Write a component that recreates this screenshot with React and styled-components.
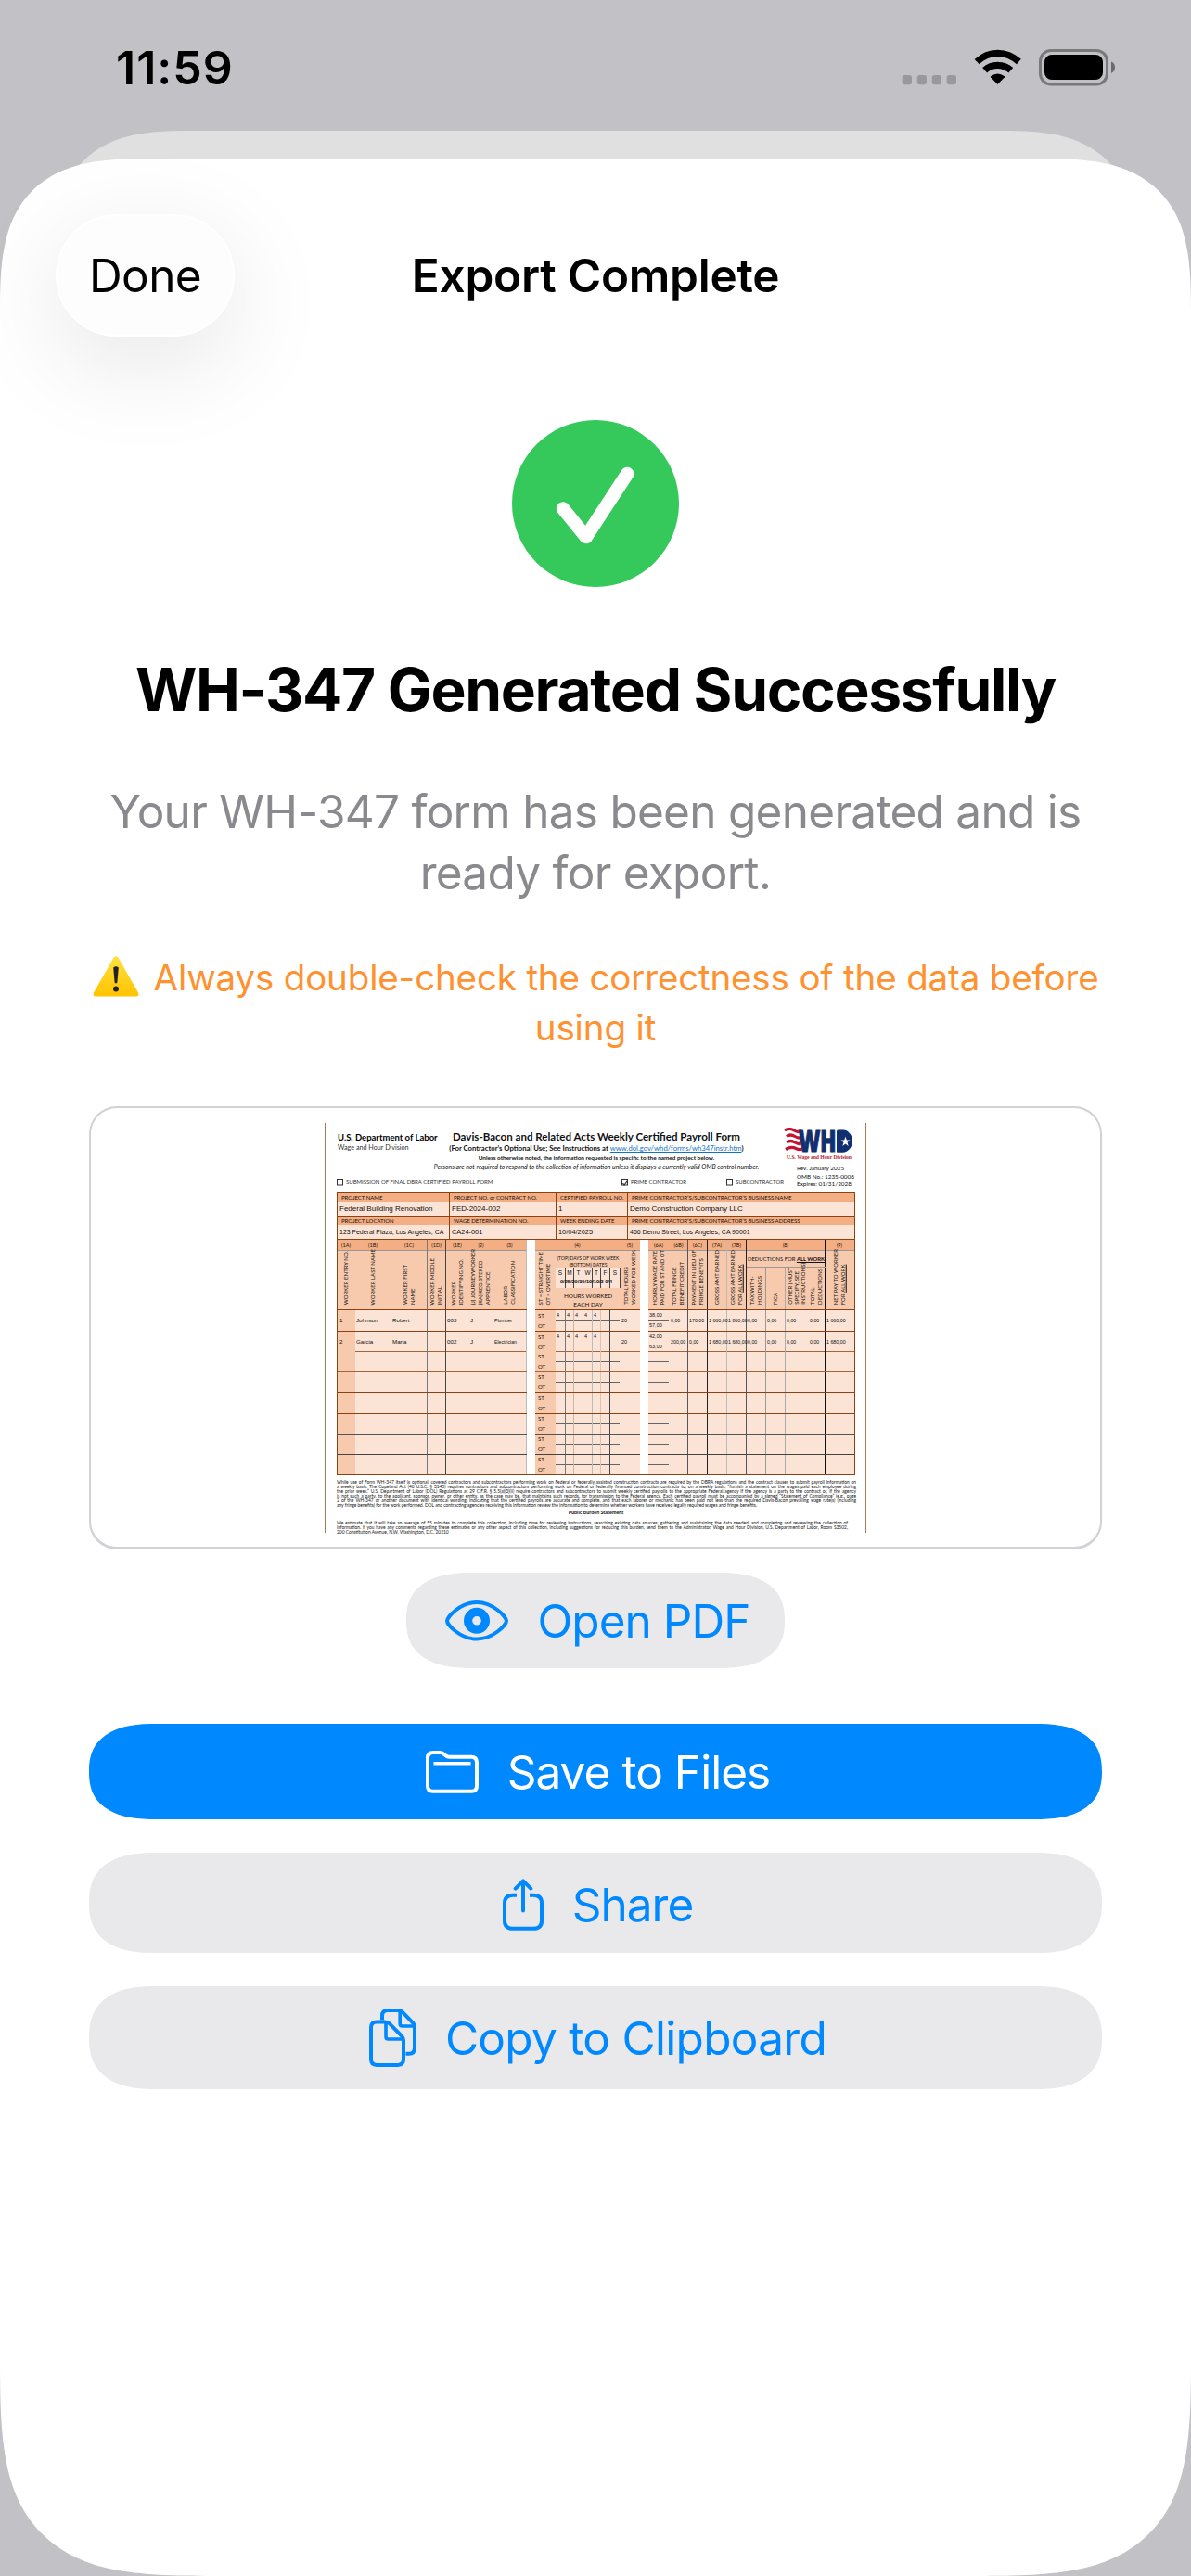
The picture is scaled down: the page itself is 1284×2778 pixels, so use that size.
import React from 'react';
import styled, { createGlobalStyle } from 'styled-components';

const GlobalStyle = createGlobalStyle`
  * {
    box-sizing: border-box;
  }
  body {
    margin: 0;
    background-color: #c2c1c6;
    font-family: Inter, 'Liberation Sans', sans-serif;
  }
`;

const Screen = styled.div`
  width: 1284px;
  height: 2778px;
  overflow: hidden;
  display: flex;
  flex-direction: column;
  background-color: #c2c1c6;
`;

const StatusBar = styled.div`
  flex: none;
  height: 141px;
  padding: 53px 81px 0 125px;
  display: flex;
  justify-content: space-between;
`;

const Time = styled.div`
  height: 40px;
  line-height: 40px;
  font-size: 50px;
  font-weight: 600;
  letter-spacing: 1px;
`;

const BackSheet = styled.div`
  flex: none;
  height: 160px;
  margin: 0 57px -130px;
  background-color: #e0e0e0;
  border-radius: 112px 112px 0 0;
  @supports (corner-shape: superellipse(1.4)) {
    border-radius: 145px 145px 0 0;
    corner-shape: superellipse(1.44);
  }
`;

const Sheet = styled.div`
  position: relative;
  flex: none;
  height: 2607px;
  padding-top: 60px;
  display: flex;
  flex-direction: column;
  background-color: #fff;
  border-radius: 119px 119px 155px 155px;
  @supports (corner-shape: superellipse(1.4)) {
    border-radius: 165px 165px 238px 238px;
    corner-shape: superellipse(1.55) superellipse(1.55) superellipse(1.71)
      superellipse(1.71);
  }
`;

const NavBar = styled.div`
  display: grid;
  grid-template-columns: 1fr auto 1fr;
  align-items: center;
  padding: 0 60px;
`;

const DoneButton = styled.button`
  width: 193px;
  height: 132px;
  padding: 0;
  border: 2px solid #fff;
  border-radius: 66px;
  background-color: #fdfdfd;
  box-shadow: 0 28px 110px rgba(0, 0, 0, 0.1);
  font-family: inherit;
  font-size: 49.5px;
  letter-spacing: -0.6px;
  color: #000;
`;

const NavTitle = styled.div`
  font-size: 49.5px;
  font-weight: 600;
  letter-spacing: -0.25px;
`;

const Content = styled.div`
  padding: 90px 96px 0;
  display: flex;
  flex-direction: column;
  align-items: center;
  text-align: center;
  white-space: nowrap;
`;

const Heading = styled.h1`
  margin: 72px 0 0;
  font-size: 64px;
  line-height: 78px;
  font-weight: 650;
  letter-spacing: -1.3px;
`;

const Message = styled.p`
  margin: 59px 0 0;
  font-size: 49.5px;
  line-height: 66px;
  letter-spacing: -0.72px;
  color: #8a8a8e;
`;

const Warning = styled.p`
  margin: 53px 0 58px;
  font-size: 38.5px;
  line-height: 54px;
  letter-spacing: -0.15px;
  color: #ff9230;
`;

const WarnIcon = styled.svg`
  width: 50px;
  height: 44px;
  margin-right: 16px;
  vertical-align: -7px;
`;

const Action = styled.button`
  width: ${(props) => props.$width || '100%'};
  height: ${(props) => props.$height}px;
  margin: ${(props) => props.$gap}px 0 0;
  padding: ${(props) => props.$drop || 0}px 0 0 5px;
  border: 0;
  display: flex;
  align-items: center;
  justify-content: center;
  gap: 31px;
  background-color: ${(props) => (props.$primary ? '#0088ff' : '#e9e9eb')};
  color: ${(props) => (props.$primary ? '#fff' : '#0088ff')};
  font-family: inherit;
  font-size: 49.5px;
  letter-spacing: ${(props) => props.$spacing || -0.95}px;
  border-radius: 56px;
  @supports (corner-shape: superellipse(1.4)) {
    border-radius: 72px / 50%;
    corner-shape: superellipse(1.32);
  }

  svg {
    flex: none;
    fill: none;
    stroke: currentColor;
    stroke-width: 4;
    stroke-linecap: round;
    stroke-linejoin: round;
  }
`;

/* ---- document preview ---- */

const brown = '#8b4213';

const Preview = styled.div`
  width: 1092px;
  height: 478px;
  padding-top: 16px;
  display: flex;
  justify-content: center;
  border: solid #d1d1d6;
  border-width: 2px 2px 3px;
  border-radius: 30px;
`;

const Doc = styled.div`
  width: 584px;
  height: 442px;
  padding: 0 11px 0 12px;
  border: solid #b07a55;
  border-width: 0 1px;
  font-family: Lato, 'Open Sans', sans-serif;
  font-size: 6px;
  line-height: 1;
  text-align: left;
  color: #111;
`;

const DocHeader = styled.div`
  height: 60px;
  display: grid;
  grid-template-columns: 100px 360px 1fr;
`;

const Dept = styled.div`
  padding: 10px 0 0 1px;
  font-size: 7.2px;
  line-height: 11px;
  color: #333;
`;

const DeptName = styled.div`
  font-size: 9.5px;
  font-weight: 700;
  color: #000;
`;

const Titles = styled.div`
  padding-top: 8px;
  display: flex;
  flex-direction: column;
  align-items: center;
`;

const DocTitle = styled.div`
  font-size: 11.55px;
  line-height: 13px;
  font-weight: 700;
`;

const DocNote = styled.div`
  font-size: ${(props) => props.$size}px;
  line-height: ${(props) => props.$line}px;
  font-weight: ${(props) => (props.$bold ? 700 : 400)};
  font-style: ${(props) => (props.$italic ? 'italic' : 'normal')};

  span {
    color: #1272c4;
    font-weight: 400;
    text-decoration: underline;
  }
`;

const Brand = styled.div`
  padding: 5px 0 0 22px;

  svg {
    display: block;
  }
`;

const Revision = styled.div`
  padding: 4px 0 0 14px;
  font-size: 6.4px;
  line-height: 8.5px;
`;

const Checks = styled.div`
  height: 15px;
  display: grid;
  grid-template-columns: 307px 113px 1fr;
  font-size: 6px;
  color: #333;
`;

const Check = styled.div`
  display: flex;
  align-items: flex-start;
  gap: 3px;
  line-height: 8px;

  svg {
    fill: none;
    stroke: #333;
  }
`;

const Info = styled.div`
  display: grid;
  grid-template-columns: 121px 115px 77px 1fr;
  border: solid ${brown};
  border-width: 0 0 0 1px;
`;

const InfoCell = styled.div`
  height: 25px;
  border: solid ${brown};
  border-width: 1px 1px 0 0;
`;

const InfoLabel = styled.div`
  height: 9px;
  padding-left: 4px;
  line-height: 9px;
  font-size: 6px;
  background-color: #f4ae83;
`;

const InfoValue = styled.div`
  height: 15px;
  padding-left: 2px;
  line-height: 15px;
  font-family: 'Liberation Sans', sans-serif;
  font-size: ${(props) => props.$size || 8}px;
  background-color: #fbe4d6;
`;

const Tables = styled.div`
  height: 255px;
  display: grid;
  grid-template-columns: 204px 113px 222px;
  column-gap: 9px;
  border: 1px solid ${brown};
`;

const Table = styled.div`
  min-width: 0;
  display: flex;
  flex-direction: column;
`;

const Row = styled.div`
  flex: none;
  display: grid;
  grid-template-columns: ${(props) => props.$cols};
  height: ${(props) => props.$height}px;
  background-color: ${(props) => props.$fill || '#fbe4d6'};
  border-bottom: 1px solid ${(props) => props.$line};
`;

const NumberCell = styled.div`
  grid-column: span ${(props) => props.$span || 1};
  border-right: 1px solid ${(props) => props.$edge || 'transparent'};
  line-height: 12px;
  font-size: 5.6px;
  text-align: center;
`;

const HeadCell = styled.div`
  min-width: 0;
  height: ${(props) => props.$height || 63}px;
  padding: 0 0 5px;
  display: flex;
  justify-content: center;
  align-items: flex-end;
  border-right: 1px solid ${(props) => props.$edge || 'transparent'};
`;

const Vertical = styled.div`
  writing-mode: vertical-rl;
  transform: rotate(180deg);
  font-size: 6px;
  line-height: ${(props) => props.$line || 8.2}px;
  white-space: pre;

  u {
    text-decoration-thickness: 0.5px;
  }
`;

const Cell = styled.div`
  min-width: 0;
  padding-left: ${(props) => props.$pad || 1}px;
  border-right: 1px solid ${(props) => props.$edge || 'transparent'};
  background-color: ${(props) => props.$fill || 'transparent'};
  font-family: 'Liberation Sans', sans-serif;
  font-size: ${(props) => props.$size || 5.5}px;
  line-height: 22px;
`;

const SplitCell = styled(Cell)`
  display: grid;
  grid-template-rows: 1fr 1fr;
  align-items: center;
  line-height: 1;
  font-family: ${(props) =>
    props.$mark ? 'Lato, sans-serif' : "'Liberation Sans', sans-serif"};
  font-size: ${(props) => (props.$mark ? 6 : 5.5)}px;
  background-image: linear-gradient(
    ${(props) => (props.$split ? '#666, #666' : 'transparent, transparent')}
  );
  background-size: 100% 1px;
  background-position: 0 50%;
  background-repeat: no-repeat;
`;

const WeekHead = styled.div`
  grid-column: span 7;
  height: 63px;
  padding-top: 5px;
  display: flex;
  flex-direction: column;
  font-size: 5px;
  line-height: 6.5px;
  text-align: center;
`;

const WeekDays = styled.div`
  display: grid;
  grid-template-columns: 11px 9px 10px 10px 9px 10px 11px;
  grid-template-rows: 10px 12px;
  background-color: #fbe4d6;
  font-family: 'Liberation Sans', sans-serif;
  font-size: 6.5px;
  line-height: 11px;

  div {
    border-right: 1px solid #444;
  }
`;

const Dates = styled.div`
  margin-top: -10px;
  padding-left: 5px;
  text-align: left;
  font-family: 'Liberation Sans', sans-serif;
  font-size: 5.6px;
  font-weight: 700;
`;

const HoursWorked = styled.div`
  padding-top: 7px;
  font-size: 6.4px;
  line-height: 9px;
`;

const Deductions = styled.div`
  grid-column: span 4;
  display: grid;
  grid-template-columns: 21px 21px 25px 18px;
  grid-template-rows: 18px 45px;
  border-right: 1px solid #111;
`;

const DeductionsTitle = styled.div`
  grid-column: span 4;
  line-height: 18px;
  font-size: 5.9px;
  text-align: center;
  border-bottom: 1px solid #999;
`;

const FinePrint = styled.div`
  padding-top: 5px;
  font-size: 4.9px;
  line-height: 5px;

  p {
    margin: 0;
    height: 5px;
    width: ${(props) => props.$width || 560}px;
    text-align-last: justify;
  }
`;

const FineTitle = styled.div`
  padding: 3px 0 1px;
  line-height: 5px;
  font-size: 5.4px;
  font-weight: 700;
  text-align: center;
`;

const ROWS = [23, 22, 22, 22, 23, 22, 22, 22];
const LINES = [brown, '#a0673f', '#a0673f', brown, brown, '#555', '#444', brown];
const SPLITS = [true, false, true, true, false, true, true, true];

const WORKERS = [
  {
    left: ['1', 'Johnson', 'Robert', '', '003', 'J', 'Plumber'],
    rates: ['38,00', '57,00'],
    pay: ['0,00', '170,00', '1 660,00', '1 860,00', '0,00', '0,00', '0,00', '0,00', '1 660,00'],
  },
  {
    left: ['2', 'Garcia', 'Maria', '', '002', 'J', 'Electrician'],
    rates: ['42,00', '63,00'],
    pay: ['200,00', '0,00', '1 680,00', '1 680,00', '0,00', '0,00', '0,00', '0,00', '1 680,00'],
  },
];

const LEFT_COLS = '19px 39px 39px 20px 25px 26px 36px';
const LEFT_EDGES = ['', '#777', '#777', '#444', '', '#666', '#bbb'];
const MID_COLS = '22px 11px 9px 10px 10px 9px 10px 11px 21px';
const MID_EDGES = ['', '#777', '#ccb5a8', '#222', '#bbb', '#d8c4b8', '#444', ''];
const RIGHT_COLS = '23px 20px 21px 21px 21px 21px 21px 25px 18px 31px';
const RIGHT_EDGES = ['', '#555', '#222', '#bbb', '#555', '#999', '#aaa', '', '#111', ''];

const LEFT_HEADS = [
  ['(1A)', 'WORKER ENTRY NO.'],
  ['(1B)', 'WORKER LAST NAME'],
  ['(1C)', 'WORKER FIRST\nNAME'],
  ['(1D)', 'WORKER MIDDLE\nINITIAL'],
  ['(1E)', 'WORKER\nIDENTIFYING NO.'],
  ['(2)', '(J) JOURNEYWORKER\n(RA) REGISTERED\nAPPRENTICE'],
  ['(3)', 'LABOR\nCLASSIFICATION'],
];

const FINE_LINES = [
  'While use of Form WH-347 itself is optional, covered contractors and subcontractors performing work on Federal or federally assisted construction contracts are required by the DBRA regulations and the contract clauses to submit payroll information on',
  'a weekly basis. The Copeland Act (40 U.S.C. § 3145) requires contractors and subcontractors performing work on Federal or federally financed construction contracts to, on a weekly basis, “furnish a statement on the wages paid each employee during',
  'the prior week.” U.S. Department of Labor (DOL) Regulations at 29 C.F.R. § 5.5(a)(3)(ii) require contractors and subcontractors to submit weekly certified payrolls to the appropriate Federal agency if the agency is a party to the contract or, if the agency',
  'is not such a party, to the applicant, sponsor, owner, or other entity, as the case may be, that maintains such records, for transmission to the Federal agency. Each certified payroll must be accompanied by a signed “Statement of Compliance” (e.g., page',
  '2 of the WH-347 or another document with identical wording) indicating that the certified payrolls are accurate and complete, and that each laborer or mechanic has been paid not less than the required Davis-Bacon prevailing wage rate(s) (including',
];

const BURDEN_LINES = [
  'We estimate that it will take an average of 55 minutes to complete this collection, including time for reviewing instructions, searching existing data sources, gathering and maintaining the data needed, and completing and reviewing the collection of',
  'information. If you have any comments regarding these estimates or any other aspect of this collection, including suggestions for reducing this burden, send them to the Administrator, Wage and Hour Division, U.S. Department of Labor, Room S3502,',
];

const StatusIcons = () => (
  <svg width="231" height="40" viewBox="972 53 231 40">
    <g fill="#99999c">
      <rect x="972.7" y="81" width="10.3" height="10.3" rx="3" />
      <rect x="988.7" y="81" width="10.3" height="10.3" rx="3" />
      <rect x="1004.7" y="81" width="10.3" height="10.3" rx="3" />
      <rect x="1020.7" y="81" width="10.3" height="10.3" rx="3" />
    </g>
    <path d="M1075.5 91L1068 83.3Q1067.6 82.6 1068.4 82Q1075.5 77 1082.6 82Q1083.4 82.6 1083 83.3Z" />
    <g fill="none" stroke="#000">
      <path d="M1053.2 66.6Q1063 57.4 1075.5 57.4Q1088 57.4 1098.4 66.6" strokeWidth="7.4" />
      <path d="M1061.6 75.8Q1067.5 70.4 1075.5 70.4Q1083.5 70.4 1089.8 75.8" strokeWidth="7.4" />
    </g>
    <rect x="1121.5" y="54.5" width="72" height="36.5" rx="11.5" fill="none" stroke="#79797c" strokeWidth="3" />
    <rect x="1126" y="59" width="63" height="27" rx="8" />
    <path d="M1198 66.5Q1202 68 1202 72.5T1198 79Z" fill="#6a6a6d" />
  </svg>
);

const SuccessIcon = () => (
  <svg width="180" height="180" viewBox="0 0 180 180">
    <circle cx="90" cy="90" r="90" fill="#35c85a" />
    <path
      d="M55 95.5L79.8 126L124.2 58"
      fill="none"
      stroke="#fff"
      strokeWidth="14.5"
      strokeLinecap="round"
      strokeLinejoin="round"
    />
  </svg>
);

const WarningIcon = () => (
  <WarnIcon viewBox="0 0 50 44">
    <defs>
      <linearGradient id="warn" x1="0" y1="0" x2="0" y2="1">
        <stop offset="0" stopColor="#ffe040" />
        <stop offset="1" stopColor="#ffc400" />
      </linearGradient>
    </defs>
    <path
      d="M22.6 1.6Q25 -1 27.4 1.6L49 39.5Q50.4 43.4 47 43.6H3Q-0.4 43.4 1 39.5Z"
      fill="url(#warn)"
    />
    <path d="M22.2 12.5Q25 10 27.8 12.5L26.4 28.5Q25 30.5 23.6 28.5Z" fill="#222" />
    <circle cx="25" cy="35.6" r="3" fill="#222" />
  </WarnIcon>
);

const EyeIcon = () => (
  <svg width="68" height="44" viewBox="0 0 68 44">
    <path d="M2 22C2 18 16 2 34 2S66 18 66 22S52 41.500 34 41.500S2 26 2 22Z" />
    <circle cx="34" cy="21.800" r="9.400" strokeWidth="9.200" />
  </svg>
);

const FolderIcon = () => (
  <svg width="57" height="46" viewBox="0 0 57 46">
    <path d="M2 38V8Q2 2 8 2H15.500Q18 2 20 4L21.500 5.300Q23 6.700 25.500 6.700H49Q55 6.700 55 12.700V38Q55 43.700 49.500 43.700H7.500Q2 43.700 2 38Z" />
    <path d="M8.500 13.800H48.500" strokeWidth="3.600" strokeLinecap="butt" />
  </svg>
);

const ShareIcon = () => (
  <svg width="44" height="56" viewBox="0 0 44 56">
    <path d="M15 17.800H11Q2 17.800 2 26.500V45.500Q2 53.800 11 53.800H33Q42 53.800 42 45.500V26.500Q42 17.800 33 17.800H29" strokeLinecap="butt" />
    <path d="M22 34.500V2.500M13.700 10.700L22 2.300L30.300 10.700" />
  </svg>
);

const CopyIcon = () => (
  <svg width="51" height="63" viewBox="0 0 51 63">
    <path d="M14 12.500V8Q14 2 20 2H31.500Q34 2 35.600 3.700L47.300 15.600Q49 17.400 49 20V42.500Q49 48.700 43 48.700H39.500" strokeLinecap="butt" />
    <path d="M33.200 3V16.500Q33.200 19 35.700 19H48.500" strokeWidth="3.600" />
    <path d="M2 54.500V20.500Q2 14.400 8 14.400H17Q20 14.400 22 16.400L35 29.700Q37 31.800 37 34.500V54.500Q37 60.900 31 60.900H8Q2 60.900 2 54.500Z" />
    <path d="M18 15.500V30.500Q18 33 20.500 33H36.500" strokeWidth="3.600" />
  </svg>
);

const BrandLogo = () => (
  <svg width="76" height="36" viewBox="0 0 76 36">
    <g fill="none" stroke="#c4122f" strokeWidth="3.200">
      <path d="M1 3Q6 0 11 3T19 3" />
      <path d="M3 9.500Q7 6.500 12 9.500T20 9.500" />
      <path d="M3 16Q7 13 12 16T20 16" />
      <path d="M2 23.500Q8 20 13 22.500T22 22" />
    </g>
    <text x="16" y="26" fill="#12306f" stroke="#12306f" strokeWidth="1.200" fontFamily="Open Sans, sans-serif" fontSize="32" fontWeight="800" textLength="57" lengthAdjust="spacingAndGlyphs">
      WHD
    </text>
    <path d="M57 3.200H65Q74 5 74 14.500T65 26.400H57Z" fill="#12306f" />
    <path d="M66.500 9.800L67.800 13.600H71.500L68.500 16L69.700 20L66.500 17.600L63.300 20L64.500 16L61.500 13.600H65.200Z" fill="#fff" />
    <text x="3" y="33.800" fill="#b8232f" fontFamily="Liberation Serif, serif" fontSize="5.700" fontWeight="700" textLength="70">
      U.S. Wage and Hour Division
    </text>
  </svg>
);

const CheckItem = ({ checked, children }) => (
  <Check>
    <svg width="7" height="8" viewBox="0 0 7 8">
      <rect x="0.500" y="0.500" width="6" height="6.500" />
      {checked && <path d="M1.500 5L3 7L7.500 1" strokeWidth="1.200" />}
    </svg>
    {children}
  </Check>
);

const InfoField = ({ label, value, size }) => (
  <InfoCell>
    <InfoLabel>{label}</InfoLabel>
    <InfoValue $size={size}>{value}</InfoValue>
  </InfoCell>
);

const VertHead = ({ edge, height, line, children }) => (
  <HeadCell $edge={edge} $height={height}>
    <Vertical $line={line}>{children}</Vertical>
  </HeadCell>
);

const LeftTable = () => (
  <Table>
    <Row $cols={LEFT_COLS} $height={12} $fill="#f4ae83" $line="#999">
      {LEFT_HEADS.map((head, i) => (
        <NumberCell key={head[0]} $edge={LEFT_EDGES[i]}>{head[0]}</NumberCell>
      ))}
    </Row>
    <Row $cols={LEFT_COLS} $height={64} $fill="#f7c9ad" $line={brown}>
      {LEFT_HEADS.map((head, i) => (
        <VertHead key={head[0]} edge={LEFT_EDGES[i]}>{head[1]}</VertHead>
      ))}
    </Row>
    {ROWS.map((height, r) => (
      <Row key={r} $cols={LEFT_COLS} $height={height} $line={LINES[r]}>
        {LEFT_EDGES.map((edge, c) => (
          <Cell key={c} $edge={edge} $size={c === 6 ? 5.2 : 6.2} $pad={c === 0 ? 2 : 1} $fill={c === 0 ? '#f7c9ad' : ''}>
            {WORKERS[r] && WORKERS[r].left[c]}
          </Cell>
        ))}
      </Row>
    ))}
  </Table>
);

const MiddleTable = () => (
  <Table>
    <Row $cols={MID_COLS} $height={12} $fill="#f4ae83" $line="#999">
      <NumberCell $span={8}>(4)</NumberCell>
      <NumberCell>(5)</NumberCell>
    </Row>
    <Row $cols={MID_COLS} $height={64} $fill="#f7c9ad" $line={brown}>
      <VertHead>{'ST = STRAIGHT TIME\nOT = OVERTIME'}</VertHead>
      <WeekHead>
        <div>(TOP) DAYS OF WORK WEEK</div>
        <div>(BOTTOM) DATES</div>
        <WeekDays>
          {['S', 'M', 'T', 'W', 'T', 'F', 'S'].map((day, i) => (
            <div key={i}>{day}</div>
          ))}
          {[0, 1, 2, 3, 4, 5, 6].map((i) => (
            <div key={i} />
          ))}
        </WeekDays>
        <Dates>9/25/29/30/10/10/3 0/4</Dates>
        <HoursWorked>
          HOURS WORKED
          <br />
          EACH DAY
        </HoursWorked>
      </WeekHead>
      <VertHead>{'TOTAL HOURS\nWORKED FOR WEEK'}</VertHead>
    </Row>
    {ROWS.map((height, r) => (
      <Row key={r} $cols={MID_COLS} $height={height} $line={LINES[r]}>
        <SplitCell $mark $pad={3} $fill="#f7c9ad">
          <span>ST</span>
          <span>OT</span>
        </SplitCell>
        {MID_EDGES.slice(1).map((edge, c) => (
          <SplitCell key={c} $edge={edge} $split={SPLITS[r]}>
            <span>{r < 2 && c < 5 ? '4' : ''}</span>
          </SplitCell>
        ))}
        <Cell>{r < 2 ? '20' : ''}</Cell>
      </Row>
    ))}
  </Table>
);

const RightTable = () => (
  <Table>
    <Row $cols={RIGHT_COLS} $height={12} $fill="#f4ae83" $line="#999">
      <NumberCell>(6A)</NumberCell>
      <NumberCell $edge="#555">(6B)</NumberCell>
      <NumberCell $edge="#222">(6C)</NumberCell>
      <NumberCell $edge="#bbb">(7A)</NumberCell>
      <NumberCell $edge="#222">(7B)</NumberCell>
      <NumberCell $span={4} $edge="#111">(8)</NumberCell>
      <NumberCell>(9)</NumberCell>
    </Row>
    <Row $cols={RIGHT_COLS} $height={64} $fill="#f7c9ad" $line={brown}>
      <VertHead>{'HOURLY WAGE RATE\nPAID FOR ST AND OT'}</VertHead>
      <VertHead edge="#555">{'TOTAL FRINGE\nBENEFIT CREDIT'}</VertHead>
      <VertHead edge="#222">{'PAYMENT IN LIEU OF\nFRINGE BENEFITS'}</VertHead>
      <VertHead edge="#bbb">GROSS AMT EARNED</VertHead>
      <VertHead edge="#222">
        GROSS AMT EARNED{'\n'}FOR <u>ALL WORK</u>
      </VertHead>
      <Deductions>
        <DeductionsTitle>
          DEDUCTIONS FOR <b><u>ALL WORK</u></b>
        </DeductionsTitle>
        <VertHead edge="#999" height={45}>{'TAX WITH-\nHOLDINGS'}</VertHead>
        <VertHead edge="#aaa" height={45}>FICA</VertHead>
        <VertHead height={45} line={7.2}>{'OTHER (MUST\nSPECIFY, SEE\nINSTRUCTIONS)'}</VertHead>
        <VertHead height={45}>{'TOTAL\nDEDUCTIONS'}</VertHead>
      </Deductions>
      <VertHead>
        NET PAY TO WORKER{'\n'}FOR <u>ALL WORK</u>
      </VertHead>
    </Row>
    {ROWS.map((height, r) => (
      <Row key={r} $cols={RIGHT_COLS} $height={height} $line={LINES[r]}>
        <SplitCell $split={SPLITS[r]}>
          <span>{WORKERS[r] && WORKERS[r].rates[0]}</span>
          <span>{WORKERS[r] && WORKERS[r].rates[1]}</span>
        </SplitCell>
        {RIGHT_EDGES.slice(1).map((edge, c) => (
          <Cell key={c} $edge={edge} $size={5.3} $pad={1}>
            {WORKERS[r] && WORKERS[r].pay[c]}
          </Cell>
        ))}
      </Row>
    ))}
  </Table>
);

const PayrollForm = () => (
  <Doc>
    <DocHeader>
      <Dept>
        <DeptName>U.S. Department of Labor</DeptName>
        Wage and Hour Division
      </Dept>
      <Titles>
        <DocTitle>Davis-Bacon and Related Acts Weekly Certified Payroll Form</DocTitle>
        <DocNote $size={7.7} $line={13} $bold>
          (For Contractor’s Optional Use; See Instructions at{' '}
          <span>www.dol.gov/whd/forms/wh347instr.htm</span>)
        </DocNote>
        <DocNote $size={6.4} $line={8.5} $bold>
          Unless otherwise noted, the information requested is specific to the named project below.
        </DocNote>
        <DocNote $size={6.9} $line={8.5} $italic>
          Persons are not required to respond to the collection of information unless it displays a
          currently valid OMB control number.
        </DocNote>
      </Titles>
      <Brand>
        <BrandLogo />
        <Revision>
          Rev. January 2025
          <br />
          OMB No.: 1235-0008
          <br />
          Expires: 01/31/2028
        </Revision>
      </Brand>
    </DocHeader>
    <Checks>
      <CheckItem>SUBMISSION OF FINAL DBRA CERTIFIED PAYROLL FORM</CheckItem>
      <CheckItem checked>PRIME CONTRACTOR</CheckItem>
      <CheckItem>SUBCONTRACTOR</CheckItem>
    </Checks>
    <Info>
      <InfoField label="PROJECT NAME" value="Federal Building Renovation" />
      <InfoField label="PROJECT NO. or CONTRACT NO." value="FED-2024-002" />
      <InfoField label="CERTIFIED PAYROLL NO." value="1" />
      <InfoField label="PRIME CONTRACTOR’S/SUBCONTRACTOR’S BUSINESS NAME" value="Demo Construction Company LLC" />
      <InfoField size={7} label="PROJECT LOCATION" value="123 Federal Plaza, Los Angeles, CA" />
      <InfoField size={7.4} label="WAGE DETERMINATION NO." value="CA24-001" />
      <InfoField size={7.4} label="WEEK ENDING DATE" value="10/04/2025" />
      <InfoField size={7} label="PRIME CONTRACTOR’S/SUBCONTRACTOR’S BUSINESS ADDRESS" value="456 Demo Street, Los Angeles, CA 90001" />
    </Info>
    <Tables>
      <LeftTable />
      <MiddleTable />
      <RightTable />
    </Tables>
    <FinePrint>
      {FINE_LINES.map((line) => (
        <p key={line}>{line}</p>
      ))}
      any fringe benefits) for the work performed. DOL and contracting agencies receiving this
      information review the information to determine whether workers have received legally
      required wages and fringe benefits.
    </FinePrint>
    <FineTitle>Public Burden Statement</FineTitle>
    <FinePrint $width={551}>
      {BURDEN_LINES.map((line) => (
        <p key={line}>{line}</p>
      ))}
      200 Constitution Avenue, N.W. Washington, D.C. 20210
    </FinePrint>
  </Doc>
);

const App = () => (
  <Screen>
    <GlobalStyle />
    <StatusBar>
      <Time>11:59</Time>
      <StatusIcons />
    </StatusBar>
    <BackSheet />
    <Sheet>
      <NavBar>
        <DoneButton>Done</DoneButton>
        <NavTitle>Export Complete</NavTitle>
      </NavBar>
      <Content>
        <SuccessIcon />
        <Heading>WH-347 Generated Successfully</Heading>
        <Message>
          Your WH-347 form has been generated and is
          <br />
          ready for export.
        </Message>
        <Warning>
          <WarningIcon />
          Always double-check the correctness of the data before
          <br />
          using it
        </Warning>
        <Preview>
          <PayrollForm />
        </Preview>
        <Action $width="408px" $height={103} $gap={25}>
          <EyeIcon />
          Open PDF
        </Action>
        <Action $height={103} $gap={60} $primary>
          <FolderIcon />
          Save to Files
        </Action>
        <Action $height={108} $gap={36} $drop={4}>
          <ShareIcon />
          Share
        </Action>
        <Action $height={111} $gap={36} $spacing={-0.7}>
          <CopyIcon />
          Copy to Clipboard
        </Action>
      </Content>
    </Sheet>
  </Screen>
);

export default App;
